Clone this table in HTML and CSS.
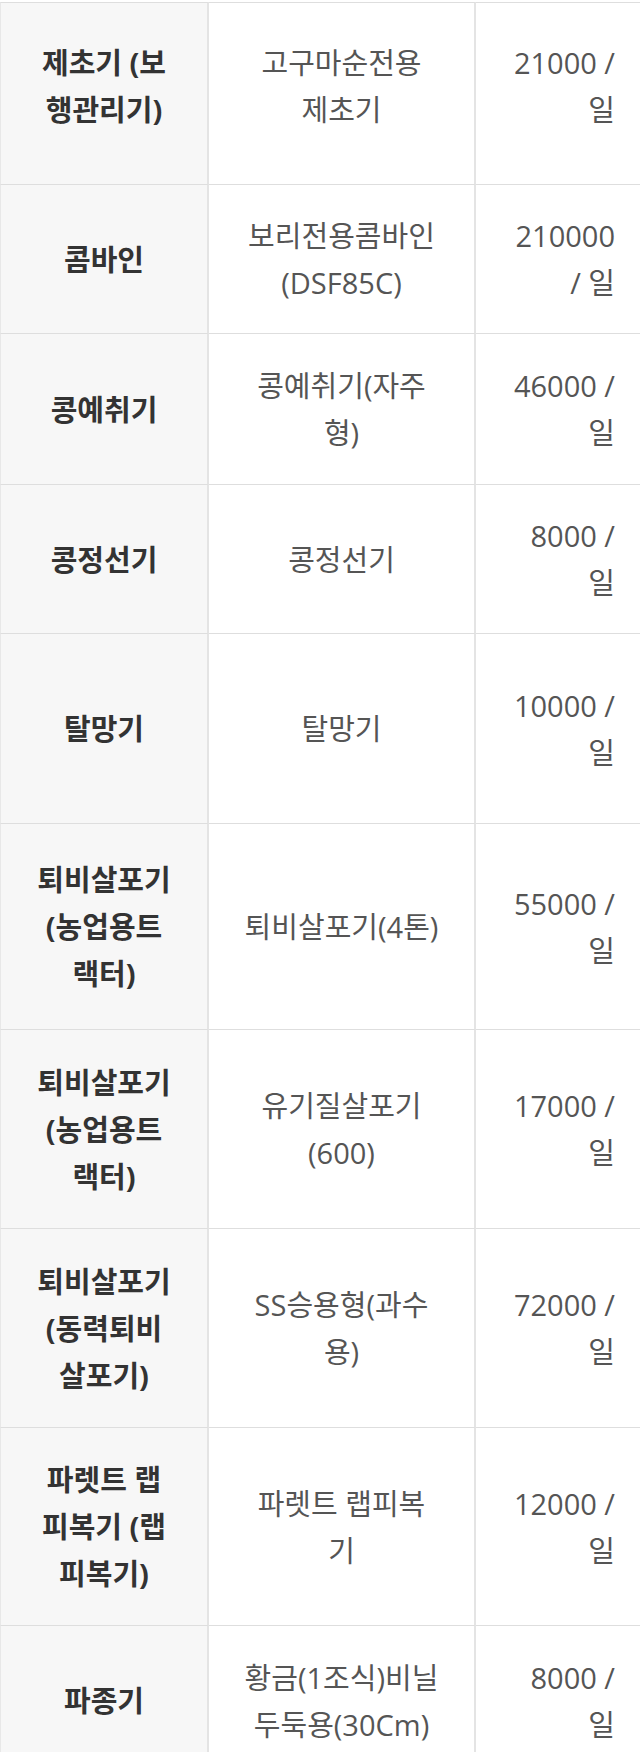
FILE: index.html
```html
<!DOCTYPE html>
<html lang="ko">
<head>
<meta charset="utf-8">
<title>농기계 임대료</title>
<link rel="stylesheet" href="styles.css">
</head>
<body>
<table class="rent">
  <colgroup>
    <col class="c-name">
    <col class="c-model">
    <col class="c-price">
  </colgroup>
  <tbody>
    <tr class="h183 first-row">
      <th>제초기 (보<br>행관리기)</th>
      <td>고구마순전용<br>제초기</td>
      <td class="price">21000 /<br>일</td>
    </tr>
    <tr class="h149">
      <th>콤바인</th>
      <td>보리전용콤바인<br>(DSF85C)</td>
      <td class="price">210000<br>/ 일</td>
    </tr>
    <tr class="h151">
      <th>콩예취기</th>
      <td>콩예취기(자주<br>형)</td>
      <td class="price">46000 /<br>일</td>
    </tr>
    <tr class="h149">
      <th>콩정선기</th>
      <td>콩정선기</td>
      <td class="price">8000 /<br>일</td>
    </tr>
    <tr class="h190">
      <th>탈망기</th>
      <td>탈망기</td>
      <td class="price">10000 /<br>일</td>
    </tr>
    <tr class="h206">
      <th>퇴비살포기<br>(농업용트<br>랙터)</th>
      <td>퇴비살포기(4톤)</td>
      <td class="price">55000 /<br>일</td>
    </tr>
    <tr class="h199">
      <th>퇴비살포기<br>(농업용트<br>랙터)</th>
      <td>유기질살포기<br>(600)</td>
      <td class="price">17000 /<br>일</td>
    </tr>
    <tr class="h199">
      <th>퇴비살포기<br>(동력퇴비<br>살포기)</th>
      <td>SS승용형(과수<br>용)</td>
      <td class="price">72000 /<br>일</td>
    </tr>
    <tr class="h198">
      <th>파렛트 랩<br>피복기 (랩<br>피복기)</th>
      <td>파렛트 랩피복<br>기</td>
      <td class="price">12000 /<br>일</td>
    </tr>
    <tr class="h150">
      <th>파종기</th>
      <td>황금(1조식)비닐<br>두둑용(30Cm)</td>
      <td class="price">8000 /<br>일</td>
    </tr>
  </tbody>
</table>
</body>
</html>
```

FILE: styles.css
```css
html, body {
  margin: 0;
  padding: 0;
  background: #ffffff;
}

body {
  padding-top: 2px;
  font-family: "Open Sans", "Noto Sans CJK KR", sans-serif;
  font-size: 29px;
  line-height: 47px;
  color: #555555;
}

.rent {
  width: 640px;
  table-layout: fixed;
  border-collapse: separate;
  border-spacing: 0;
}

.c-name { width: 209px; }
.c-model { width: 267px; }
.c-price { width: 164px; }

.rent th,
.rent td {
  padding: 0 12px;
  border-bottom: 1px solid #dedede;
  vertical-align: middle;
  text-align: center;
  font-weight: 400;
}

.rent tr:first-child th,
.rent tr:first-child td {
  border-top: 1px solid #dedede;
}

.rent .first-row th,
.rent .first-row td {
  padding-bottom: 16px;
}

.rent th {
  background: #f7f7f7;
  color: #333333;
  font-weight: 700;
  border-left: 1px solid #e8e8e8;
  border-right: 2px solid #e4e4e4;
}

.rent td {
  border-right: 2px solid #e4e4e4;
}

.rent td.price {
  border-right: 0;
  text-align: right;
  padding-left: 8px;
  padding-right: 25px;
}

.h149 { height: 149px; }
.h150 { height: 150px; }
.h151 { height: 151px; }
.h183 { height: 183px; }
.h190 { height: 190px; }
.h198 { height: 198px; }
.h199 { height: 199px; }
.h206 { height: 206px; }
```
